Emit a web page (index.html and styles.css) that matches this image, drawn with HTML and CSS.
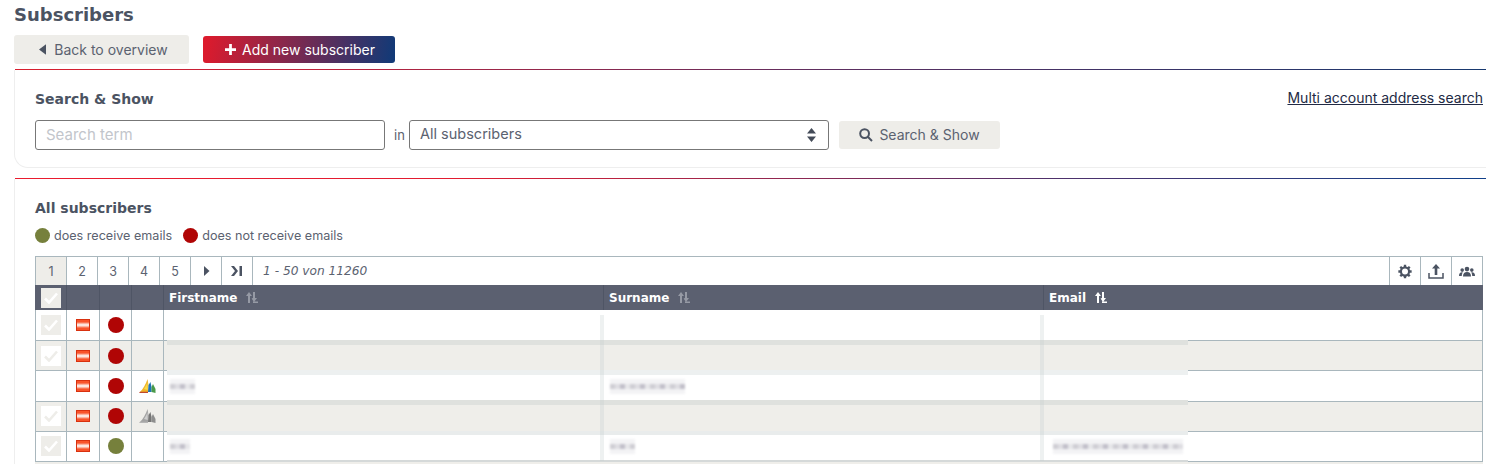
FILE: index.html
```html
<!DOCTYPE html>
<html lang="en">
<head>
<meta charset="utf-8">
<title>Subscribers</title>
<link rel="stylesheet" href="styles.css">
</head>
<body>
<h1 class="page-title">Subscribers</h1>
<div class="actions">
  <a class="btn btn-grey"><svg class="ico-back" viewBox="0 0 8 12"><path d="M8 0v12L0 6z"/></svg>Back to overview</a>
  <a class="btn btn-brand"><svg class="ico-plus" viewBox="0 0 12 12"><path d="M4.500 0h3v4.500H12v3H7.500V12h-3V7.500H0v-3h4.500z"/></svg>Add new subscriber</a>
</div>
<div class="rule rule-a"></div>
<section class="card card-search">
  <div class="card-head">
    <h2>Search &amp; Show</h2>
    <a class="multi">Multi account address search</a>
  </div>
  <div class="search-row">
    <input class="term" placeholder="Search term">
    <span class="in">in</span>
    <div class="select">All subscribers<svg viewBox="0 0 9 14"><path d="M4.500 0L9 5.500H0zM4.500 14L0 8.500h9z"/></svg></div>
    <a class="btn-search"><svg viewBox="0 0 14 14"><circle cx="5.600" cy="5.600" r="4.400"/><path d="M9 9l4 4"/></svg>Search &amp; Show</a>
  </div>
</section>
<div class="rule rule-b"></div>
<section class="card card-list">
  <h2>All subscribers</h2>
  <div class="legend">
    <span class="dot green"></span><span class="legend-text">does receive emails</span>
    <span class="dot red"></span><span class="legend-text">does not receive emails</span>
  </div>
  <div class="grid">
    <div class="pager">
      <span class="pg active">1</span><span class="pg">2</span><span class="pg">3</span><span class="pg">4</span><span class="pg">5</span>
      <span class="pg"><svg class="pi" viewBox="0 0 7 10"><path d="M1 0l5.500 5L1 10z"/></svg></span>
      <span class="pg"><svg class="pi2" viewBox="0 0 12 10"><path d="M0 0h3l4 5-4 5H0l4-5z"/><path d="M8.500 0H11v10H8.500z"/></svg></span>
      <span class="range">1 - 50 von 11260</span>
      <span class="tool"><svg viewBox="0 0 14 14"><path class="gear" d="M7 .8v2.400M7 10.800v2.400M.8 7h2.400M10.800 7h2.400M2.600 2.600l1.700 1.700M9.700 9.700l1.700 1.700M2.600 11.400l1.700-1.700M9.700 4.300l1.700-1.700"/><circle class="gear-c" cx="7" cy="7" r="3.800"/></svg></span>
      <span class="tool"><svg viewBox="0 0 16 15"><path class="up" d="M8 0l4 4.500H9.300V11H6.700V4.500H4z"/><path class="tray" d="M1 9v5h14V9"/></svg></span>
      <span class="tool"><svg viewBox="0 0 16 10"><g class="people"><circle cx="8" cy="2.600" r="2.300"/><circle cx="3.200" cy="3.600" r="1.800"/><circle cx="12.800" cy="3.600" r="1.800"/><path d="M4 10c0-3 1.500-4.400 4-4.400s4 1.400 4 4.400z"/><path d="M0 9.500c0-2.400 1-3.700 3-3.700l.8.2C3 7 2.800 8.200 2.800 9.500zM16 9.500c0-2.400-1-3.700-3-3.700l-.8.2c.8 1 1 2.200 1 3.500z"/></g></svg></span>
    </div>
    <div class="thead">
      <span class="th c1"><span class="cb head-cb"><svg viewBox="0 0 14 12"><path d="M1 6.500l4 4 8-9"/></svg></span></span>
      <span class="th c2"></span><span class="th c3"></span><span class="th c4"></span>
      <span class="th c5">Firstname<svg class="sort dim" viewBox="0 0 12 11"><path d="M3 0l3 4H4v7H2V4H0zM7 0h2v6h2L8 10 5.600 6.500 7 6zM7 9.500h5V11H7z"/></svg></span>
      <span class="th c6">Surname<svg class="sort dim" viewBox="0 0 12 11"><path d="M3 0l3 4H4v7H2V4H0zM7 0h2v6h2L8 10 5.600 6.500 7 6zM7 9.500h5V11H7z"/></svg></span>
      <span class="th c7">Email<svg class="sort" viewBox="0 0 12 11"><path d="M3 0l3 4H4v7H2V4H0zM7 0h2v6h2L8 10 5.600 6.500 7 6zM7 9.500h5V11H7z"/></svg></span>
    </div>
    <div class="row">
      <span class="td c1"><span class="cb"><svg viewBox="0 0 14 12"><path d="M1 6.500l4 4 8-9"/></svg></span></span>
      <span class="td c2"><span class="flag"></span></span><span class="td c3"><span class="dot-lg red"></span></span><span class="td c4"></span>
      <span class="td c5"></span><span class="td c6"></span><span class="td c7"></span>
    </div>
    <div class="row alt">
      <span class="td c1"><span class="cb"><svg viewBox="0 0 14 12"><path d="M1 6.500l4 4 8-9"/></svg></span></span>
      <span class="td c2"><span class="flag"></span></span><span class="td c3"><span class="dot-lg red"></span></span><span class="td c4"></span>
      <span class="td c5"></span><span class="td c6"></span><span class="td c7"></span>
    </div>
    <div class="row">
      <span class="td c1"></span>
      <span class="td c2"><span class="flag"></span></span><span class="td c3"><span class="dot-lg red"></span></span>
      <span class="td c4"><svg class="dyn" viewBox="0 0 17 14"><path fill="#f0b429" d="M1 13C4 10 7 5 8.500 0l1 6L9 13z"/><path fill="#f8dc4a" d="M5 10C6.500 8 8 5 8.500 3l.2 8z"/><path fill="#1f73b7" d="M9 13l.5-7 2-3 1 5v5z"/><path fill="#4a9a4a" d="M12.500 13V8L14 5l2.500 5v4z"/><path fill="#c0492c" d="M0 14l1-1.200h8V14z"/></svg></span>
      <span class="td c5"><span class="smudge s1"></span></span><span class="td c6"><span class="smudge s2"></span></span><span class="td c7"></span>
    </div>
    <div class="row alt">
      <span class="td c1"><span class="cb"><svg viewBox="0 0 14 12"><path d="M1 6.500l4 4 8-9"/></svg></span></span>
      <span class="td c2"><span class="flag"></span></span><span class="td c3"><span class="dot-lg red"></span></span>
      <span class="td c4"><svg class="dyn" viewBox="0 0 17 14"><path fill="#a3a3a3" d="M1 13C4 10 7 5 8.500 0l1 6L9 13z"/><path fill="#cfcfcf" d="M5 10C6.500 8 8 5 8.500 3l.2 8z"/><path fill="#767676" d="M9 13l.5-7 2-3 1 5v5z"/><path fill="#8e8e8e" d="M12.500 13V8L14 5l2.500 5v4z"/><path fill="#b5b5b5" d="M0 14l1-1.200h8V14z"/></svg></span>
      <span class="td c5"></span><span class="td c6"></span><span class="td c7"></span>
    </div>
    <div class="row">
      <span class="td c1"><span class="cb"><svg viewBox="0 0 14 12"><path d="M1 6.500l4 4 8-9"/></svg></span></span>
      <span class="td c2"><span class="flag"></span></span><span class="td c3"><span class="dot-lg green"></span></span><span class="td c4"></span>
      <span class="td c5"><span class="smudge s3"></span></span><span class="td c6"><span class="smudge s4"></span></span><span class="td c7"><span class="smudge s5"></span></span>
    </div>
    <div class="row alt tail"></div>
    <div class="veil">
      <span class="band b1"></span><span class="band b2"></span><span class="band b3"></span><span class="band b4"></span><span class="band b5"></span>
      <span class="vband v1"></span><span class="vband v2"></span>
    </div>
  </div>
</section>
</body>
</html>
```
FILE: styles.css
```css
* { box-sizing: border-box; }
html, body { height: 464px; overflow: hidden; }
body { margin: 0; padding: 0 0 0 14px; width: 1486px; background: #fff; color: #4b5362; font-family: Inter, "Liberation Sans", sans-serif; font-size: 14px; }
.page-title { margin: 0; padding-top: 5px; height: 35px; font: bold 18px/20px "DejaVu Sans", sans-serif; color: #4b5362; }
.actions { display: flex; align-items: center; gap: 14px; height: 29px; }
.btn { display: flex; align-items: center; justify-content: center; border-radius: 3px; font-size: 14px; }
.btn-grey { width: 175px; height: 29px; padding-left: 4px; background: #eeede9; color: #5b6270; }
.ico-back { width: 7px; height: 11px; margin-right: 8px; fill: #4b5362; }
.btn-brand { width: 192px; height: 27px; padding-left: 2px; background: linear-gradient(100deg, #e01a2b 0%, #0f3a78 100%); color: #fff; }
.ico-plus { width: 11px; height: 11px; margin-right: 6px; fill: #fff; }
.rule { height: 1px; margin-left: 1px; }
.rule-a { margin-top: 5px; background: linear-gradient(90deg, #d81f2e 0%, #c0213a 20%, #5e2e60 55%, #17396f 100%); }
.rule-b { margin-top: 10px; background: linear-gradient(90deg, #ea1b2e 0%, #e21c30 30%, #50306a 70%, #10408a 100%); }
.card { border-left: 1px solid #eeeeee; }
.card h2 { margin: 0; font: bold 14px/18px "DejaVu Sans", sans-serif; color: #4b5362; }
.card-search { height: 98px; padding: 20px 0 0 20px; border-bottom: 1px solid #eeeeee; border-radius: 0 0 0 14px; }
.card-head { display: flex; justify-content: space-between; align-items: flex-start; width: 1448px; height: 30px; }
.multi { color: #222a44; text-decoration: underline; font-size: 14px; line-height: 16px; }
.search-row { display: flex; align-items: center; height: 30px; }
.term { width: 350px; height: 30px; padding: 0 10px 2px; border: 1px solid #777; border-radius: 3px; font: 15px Inter, sans-serif; color: #444; outline: none; }
.term::placeholder { color: #c2c5cb; opacity: 1; }
.in { width: 24px; padding-left: 5px; text-align: center; font-size: 13px; color: #5b6270; }
.select { display: flex; align-items: center; justify-content: space-between; width: 420px; height: 30px; padding: 0 12px 4px 10px; border: 1px solid #777; border-radius: 3px; color: #5b6270; font-size: 14.500px; }
.select svg { width: 9px; height: 14px; margin-top: 4px; fill: #444b58; }
.btn-search { display: flex; align-items: center; justify-content: center; width: 161px; height: 28px; margin-left: 10px; padding-bottom: 1px; background: #eeede9; border-radius: 3px; color: #5b6270; font-size: 14px; }
.btn-search svg { width: 14px; height: 14px; margin-right: 6px; fill: none; stroke: #4b5362; stroke-width: 2; }
.card-list { height: 285px; padding: 20px 0 0 20px; }
.legend { display: flex; align-items: center; height: 16px; margin-top: 10px; font-size: 12.600px; color: #5b6270; }
.dot { width: 15px; height: 15px; border-radius: 50%; margin-right: 4px; }
.dot.red { margin-left: 11px; }
.dot.green, .dot-lg.green { background: #76803c; }
.dot.red, .dot-lg.red { background: #b00505; }
.grid { position: relative; width: 1448px; margin-top: 13px; }
.pager { display: flex; height: 29px; border: 1px solid #a9b7bd; border-bottom: 0; }
.pg { display: flex; align-items: center; justify-content: center; width: 31px; flex: none; border-right: 1px solid #a9b7bd; font-size: 12.500px; color: #5b6270; }
.pg.active { background: #eeede9; }
.pi { width: 7px; height: 10px; fill: #4b5362; }
.pi2 { width: 12px; height: 10px; fill: #4b5362; }
.range { flex: 1; padding: 0 0 0 10px; font: italic 12.200px/29px "DejaVu Sans", sans-serif; color: #5b6270; }
.tool { display: flex; align-items: center; justify-content: center; width: 31px; border-left: 1px solid #a9b7bd; }
.tool svg { width: 16px; height: 15px; }
.gear { fill: none; stroke: #4b5362; stroke-width: 2.200; }
.gear-c { fill: none; stroke: #4b5362; stroke-width: 2; }
.up { fill: #4b5362; }
.tray { fill: none; stroke: #4b5362; stroke-width: 1.500; }
.people { fill: #4b5362; }
.thead { display: flex; height: 25px; background: #5b6070; }
.th { display: flex; align-items: center; height: 25px; border-right: 1px solid #4f5565; color: #fff; font: bold 12px "DejaVu Sans", sans-serif; }
.th.c5, .th.c6, .th.c7 { padding-left: 5px; }
.th.c7 { border-right: 0; }
.c1 { width: 32px; flex: none; justify-content: center; }
.c2 { width: 33px; flex: none; justify-content: center; }
.c3 { width: 32px; flex: none; justify-content: center; }
.c4 { width: 32px; flex: none; justify-content: center; }
.c5 { width: 440px; flex: none; }
.c6 { width: 440px; flex: none; }
.c7 { width: 439px; flex: none; }
.sort { width: 12px; height: 11px; margin-left: 9px; fill: #fff; }
.sort.dim { fill: #969aa5; }
.row { display: flex; height: 30.250px; background: #fff; }
.thead + .row { height: 31px; }
.row.alt { background: #efeeea; }
.row.tail { height: 2px; }
.td { display: flex; align-items: center; height: 100%; border-right: 1px solid #a9b7bd; border-bottom: 1px solid #a9b7bd; }
.td.c1 { border-left: 1px solid #a9b7bd; }
.td.c5, .td.c6, .td.c7 { padding-left: 6px; }
.td.c5, .td.c6 { border-right: 0; }
.cb { display: flex; align-items: center; justify-content: center; width: 20px; height: 20px; background: #eeede9; }
.cb svg { width: 14px; height: 12px; fill: none; stroke: #fff; stroke-width: 2.600; }
.alt .cb { background: #fff; }
.alt .cb svg { stroke: #eeede9; }
.head-cb svg { stroke: #fff; }
.flag { width: 14px; height: 12px; border: 1px solid #d8310f; background: linear-gradient(#f9532a 0 18%, #f98f73 30%, #fde5de 42%, #fde5de 58%, #f98f73 70%, #f9532a 82% 100%); }
.dot-lg { width: 16px; height: 16px; border-radius: 50%; }
.dyn { width: 17px; height: 14px; }
.smudge { display: block; height: 15px; margin-top: 1px; filter: blur(.8px); background-color: #f3f3f5; background-image: repeating-linear-gradient(90deg, #cfced4 0 5px, #dedde2 5px 10px, #c2c0ca 10px 15px, #e6e6e9 15px 20px); background-size: 100% 5px; background-repeat: no-repeat; background-position: 0 5px; }
.s1 { width: 25px; }
.s2 { width: 75px; }
.s3 { width: 20px; }
.s4 { width: 25px; }
.s5 { width: 130px; margin-left: 3px; }
.veil { position: absolute; inset: 0; pointer-events: none; }
.band { position: absolute; left: 132px; width: 1021px; height: 5px; background: #dfe1de; }
.b1 { top: 84px; }
.b2 { top: 114px; background: #edf0f0; }
.b3 { top: 144px; }
.b4 { top: 175px; height: 4px; background: #e9ecec; }
.b5 { top: 204px; height: 2px; background: #d5d9d9; }
.vband { position: absolute; top: 59px; width: 4px; height: 146px; background: rgba(195, 205, 205, .28); }
.v1 { left: 565px; }
.v2 { left: 1005px; }
```
